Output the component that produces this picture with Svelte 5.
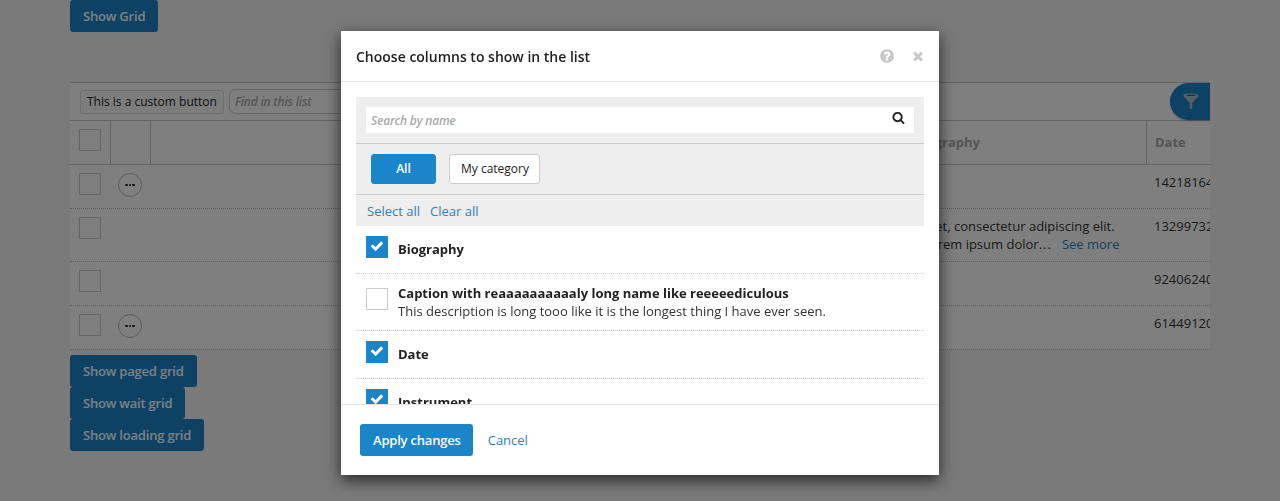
<script>
  const rows = [
    { menu: true, date: "1421816400000", h: "short" },
    { menu: false, date: "1329973200000", h: "tall", bio: true },
    { menu: false, date: "924062400000", h: "short" },
    { menu: true, date: "614491200000", h: "short" }
  ];

  const columns = [
    { name: "Biography", checked: true },
    {
      name: "Caption with reaaaaaaaaaaly long name like reeeeediculous",
      desc: "This description is long tooo like it is the longest thing I have ever seen.",
      checked: false
    },
    { name: "Date", checked: true },
    { name: "Instrument", checked: true }
  ];
</script>

<div class="page">
  <button class="btn">Show Grid</button>

  <div class="grid">
    <div class="toolbar">
      <span class="custom">This is a custom button</span>
      <span class="find">Find in this list</span>
      <span class="filter">
        <svg viewBox="0 0 16 16" width="16" height="16">
          <path d="M0.5 2.4C0.5 0 15.5 0 15.5 2.4 15.5 3 15 3.6 14.6 4.1L9.2 10V16H6.8V10L1.4 4.1C1 3.6 0.5 3 0.5 2.4Z" fill="#b0bfc9" />
          <path d="M3 2.3C5 3 11 3 13 2.3 11 1.7 5 1.7 3 2.3Z" fill="#0e4365" />
        </svg>
      </span>
    </div>
    <div class="row head">
      <div class="cell c-check"><span class="box"></span></div>
      <div class="cell c-menu"></div>
      <div class="cell c-name"></div>
      <div class="cell c-bio">Biography</div>
      <div class="cell c-date">Date</div>
    </div>
    {#each rows as r}
      <div class="row {r.h}">
        <div class="cell c-check"><span class="box"></span></div>
        <div class="cell c-menu">
          {#if r.menu}
            <span class="more"><i></i><i></i><i></i></span>
          {/if}
        </div>
        <div class="cell c-name"></div>
        <div class="cell c-bio">
          {#if r.bio}
            amet, consectetur adipiscing elit.<br /><span class="second">Lorem ipsum dolor<span class="dots">...</span><a class="see">See more</a></span>
          {/if}
        </div>
        <div class="cell c-date">{r.date}</div>
      </div>
    {/each}
  </div>

  <div class="stack">
    <button class="btn">Show paged grid</button>
    <button class="btn">Show wait grid</button>
    <button class="btn">Show loading grid</button>
  </div>
</div>

<div class="overlay"></div>

<div class="modal">
  <header>
    <h2>Choose columns to show in the list</h2>
    <svg class="help" viewBox="0 0 1792 1792" width="16" height="16">
      <path d="M1024 1376v-192q0-14-9-23t-23-9h-192q-14 0-23 9t-9 23v192q0 14 9 23t23 9h192q14 0 23-9t9-23zm256-672q0-88-55.5-163t-138.5-116-170-41q-243 0-371 213-15 24 8 42l132 100q7 6 19 6 16 0 25-12 53-68 86-92 34-24 86-24 48 0 85.5 26t37.5 59q0 38-20 61t-68 45q-63 28-115.5 86.5t-52.5 125.5v36q0 14 9 23t23 9h192q14 0 23-9t9-23q0-19 21.5-49.5t54.5-49.5q32-18 49-28.5t46-35 44.5-48 28-60.5 12.5-81zm384 192q0 209-103 385.5t-279.5 279.5-385.5 103-385.5-103-279.5-279.5-103-385.5 103-385.5 279.5-279.5 385.5-103 385.5 103 279.5 279.5 103 385.5z" />
    </svg>
    <svg class="close" viewBox="0 0 1792 1792" width="14" height="14">
      <path d="M1490 1322q0 40-28 68l-136 136q-28 28-68 28t-68-28l-294-294-294 294q-28 28-68 28t-68-28l-136-136q-28-28-28-68t28-68l294-294-294-294q-28-28-28-68t28-68l136-136q28-28 68-28t68 28l294 294 294-294q28-28 68-28t68 28l136 136q28 28 28 68t-28 68l-294 294 294 294q28 28 28 68z" />
    </svg>
  </header>

  <div class="body">
    <div class="panel">
      <div class="search">
        <span>Search by name</span>
        <svg viewBox="0 0 1792 1792" width="13" height="13">
          <path d="M1216 832q0-185-131.5-316.5t-316.5-131.5-316.5 131.5-131.5 316.5 131.5 316.5 316.5 131.5 316.5-131.5 131.5-316.5zm512 832q0 52-38 90t-90 38q-54 0-90-38l-343-342q-179 124-399 124-143 0-273.5-55.5t-225-150-150-225-55.5-273.5 55.5-273.5 150-225 225-150 273.5-55.5 273.5 55.5 225 150 150 225 55.5 273.5q0 220-124 399l343 343q37 37 37 90z" />
        </svg>
      </div>
      <div class="tabs">
        <span class="tab active">All</span>
        <span class="tab">My category</span>
      </div>
      <div class="links">
        <a>Select all</a>
        <a>Clear all</a>
      </div>
    </div>

    <ul class="list">
      {#each columns as c}
        <li class:double={c.desc}>
          <span class="check" class:on={c.checked}>
            {#if c.checked}
              <svg viewBox="0 0 1792 1792" width="14" height="14">
                <path d="M1671 566q0 40-28 68l-724 724-136 136q-28 28-68 28t-68-28l-136-136-362-362q-28-28-28-68t28-68l136-136q28-28 68-28t68 28l294 295 656-657q28-28 68-28t68 28l136 136q28 28 28 68z" />
              </svg>
            {/if}
          </span>
          <div class="label">
            <strong>{c.name}</strong>
            {#if c.desc}<p>{c.desc}</p>{/if}
          </div>
        </li>
      {/each}
    </ul>
  </div>

  <footer>
    <button class="btn apply">Apply changes</button>
    <a>Cancel</a>
  </footer>
</div>

<style>
  :global(body) {
    background: #f5f5f5;
    font-family: "Open Sans", "Noto Sans", sans-serif;
    font-size: 13px;
    color: #333;
    overflow: hidden;
  }

  .page {
    padding: 0 70px;
    height: 501px;
    box-sizing: border-box;
  }

  .btn {
    display: block;
    height: 32px;
    padding: 0 13px;
    border: 0;
    border-radius: 3px;
    background: #1b85c9;
    color: #fff;
    font: 600 13px "Open Sans", sans-serif;
    letter-spacing: -0.2px;
  }

  .btn.apply {
    padding-right: 12px;
  }

  /* ───────── grid behind the dialog ───────── */
  .grid {
    margin-top: 50px;
    background: #fff;
    border-top: 1px solid #c8c8c8;
    overflow: hidden;
  }

  .toolbar {
    display: flex;
    align-items: center;
    gap: 5px;
    height: 37px;
    padding-left: 10px;
  }

  .custom {
    display: flex;
    align-items: center;
    height: 22px;
    padding: 0 6px;
    border: 1px solid #ddd;
    border-radius: 3px;
    font-size: 12px;
    color: #222;
    background: #fafafa;
  }

  .find {
    display: flex;
    align-items: center;
    width: 300px;
    height: 23px;
    padding-left: 5px;
    border: 1px solid #ccc;
    border-radius: 6px;
    font-size: 12px;
    font-style: italic;
    font-weight: 600;
    letter-spacing: -0.2px;
    color: #aaa;
  }

  .filter {
    margin-left: auto;
    margin-top: -1px;
    display: flex;
    align-items: center;
    justify-content: center;
    box-sizing: border-box;
    width: 40px;
    height: 37px;
    border-radius: 19px 0 0 19px;
    background: #1b85c9;
    box-shadow: 0 1px 2px rgba(0, 0, 0, 0.25);
    padding-left: 1px;
  }

  .row {
    display: grid;
    grid-template-columns: 41px 40px 757px 239px 64px;
    box-sizing: border-box;
    border-bottom: 1px dotted #bbb;
  }

  .head {
    height: 45px;
    border-top: 1px solid #c8c8c8;
    border-bottom: 1px solid #c8c8c8;
    font-weight: 700;
    font-size: 13px;
  }

  .head .cell {
    border-right: 1px solid #c8c8c8;
    align-items: center;
    display: flex;
  }

  .head .c-date {
    border-right: 0;
  }

  .short {
    height: 44px;
  }

  .tall {
    height: 53px;
  }

  .cell {
    box-sizing: border-box;
    min-width: 0;
  }

  .c-check {
    padding: 8px 0 0 9px;
  }

  .head .cell.c-check {
    align-items: flex-start;
  }

  .box {
    display: block;
    width: 20px;
    height: 20px;
    border: 1px solid #ccc;
    background: #fff;
  }

  .c-menu {
    padding: 8px 0 0 7px;
  }

  .more {
    display: flex;
    align-items: center;
    justify-content: center;
    gap: 1px;
    box-sizing: border-box;
    width: 24px;
    height: 24px;
    border: 1px solid #bbb;
    border-radius: 50%;
  }

  .more i {
    width: 2.5px;
    height: 2.5px;
    border-radius: 50%;
    background: #222;
  }

  .c-bio {
    padding: 8px;
    line-height: 18px;
    color: #333;
    white-space: nowrap;
  }

  .second {
    margin-left: 7px;
  }

  .dots {
    letter-spacing: 1px;
  }

  .see {
    margin-left: 10px;
    color: #2a82c5;
  }

  .c-date {
    padding: 7px 7px;
    line-height: 20px;
    white-space: nowrap;
    color: #333;
  }

  .head .c-date {
    padding: 0 8px 2px;
    color: #aaa;
  }

  .head .c-bio {
    padding: 0 8px 2px 6px;
    color: #aaa;
  }

  .stack {
    margin-top: 5px;
  }

  /* ───────── dialog ───────── */
  .overlay {
    position: fixed;
    inset: 0;
    background: rgba(0, 0, 0, 0.5);
  }

  .modal {
    position: fixed;
    left: 341px;
    top: 31px;
    width: 598px;
    height: 444px;
    display: flex;
    flex-direction: column;
    background: #fff;
    box-shadow: 0 5px 15px rgba(0, 0, 0, 0.7);
  }

  header {
    display: flex;
    align-items: center;
    height: 50px;
    flex: none;
    padding: 0 14px 0 15px;
    border-bottom: 1px solid #e5e5e5;
  }

  h2 {
    flex: 1;
    margin: 0;
    font-size: 14px;
    font-weight: 600;
    color: #222;
  }

  .help {
    fill: #c8c8c8;
    margin-right: 16px;
  }

  .close {
    fill: #c8c8c8;
  }

  .body {
    flex: 1;
    min-height: 0;
    overflow: hidden;
    padding: 15px 15px 0;
  }

  .panel {
    background: #eee;
  }

  .search {
    display: flex;
    align-items: center;
    justify-content: space-between;
    height: 26px;
    margin: 0 10px;
    position: relative;
    top: 10px;
    padding: 0 9px 0 5px;
    background: #fff;
    font-size: 12px;
    font-style: italic;
    font-weight: 600;
    letter-spacing: -0.2px;
    color: #aaa;
  }

  .search svg {
    fill: #222;
    margin-top: -5px;
  }

  .tabs {
    display: flex;
    gap: 13px;
    margin-top: 20px;
    padding: 10px 15px;
    height: 30px;
    border-top: 1px solid #ccc;
    border-bottom: 1px solid #ccc;
  }

  .tab {
    display: flex;
    align-items: center;
    justify-content: center;
    box-sizing: border-box;
    height: 30px;
    padding: 0 10px 2px 11px;
    border: 1px solid #ccc;
    border-radius: 3px;
    background: #fff;
    font-size: 12px;
    color: #222;
  }

  .tab.active {
    width: 65px;
    padding: 0 0 2px 0;
    border-color: #1b85c9;
    background: #1b85c9;
    color: #fff;
    font-weight: 600;
  }

  .links {
    display: flex;
    gap: 10px;
    height: 31px;
    align-items: center;
    padding-left: 11px;
    font-size: 13px;
    color: #2a82c5;
  }

  .list {
    list-style: none;
    margin: 0;
    padding: 0;
  }

  li {
    display: flex;
    gap: 10px;
    padding: 10px 10px 0;
    height: 48px;
    box-sizing: border-box;
    border-bottom: 1px dotted #ccc;
  }

  li.double {
    height: 57px;
    padding-top: 14px;
  }

  .check {
    flex: none;
    display: flex;
    align-items: center;
    justify-content: center;
    box-sizing: border-box;
    width: 22px;
    height: 22px;
    border: 1px solid #ccc;
    background: #fff;
  }

  .check.on {
    border-color: #1b85c9;
    background: #1b85c9;
  }

  .check svg {
    fill: #fff;
    margin-top: -3px;
  }

  .label {
    line-height: 18px;
    font-size: 13px;
    color: #333;
    padding-top: 4px;
  }

  .double .label {
    padding-top: 0;
    margin-top: -4px;
  }

  strong {
    display: block;
    font-weight: 700;
    color: #222;
  }

  p {
    margin: 0;
  }

  footer {
    display: flex;
    align-items: center;
    gap: 15px;
    flex: none;
    height: 71px;
    padding: 0 19px;
    box-sizing: border-box;
    border-top: 1px solid #e5e5e5;
    background: #fff;
    font-size: 13px;
    color: #2a82c5;
  }
</style>
